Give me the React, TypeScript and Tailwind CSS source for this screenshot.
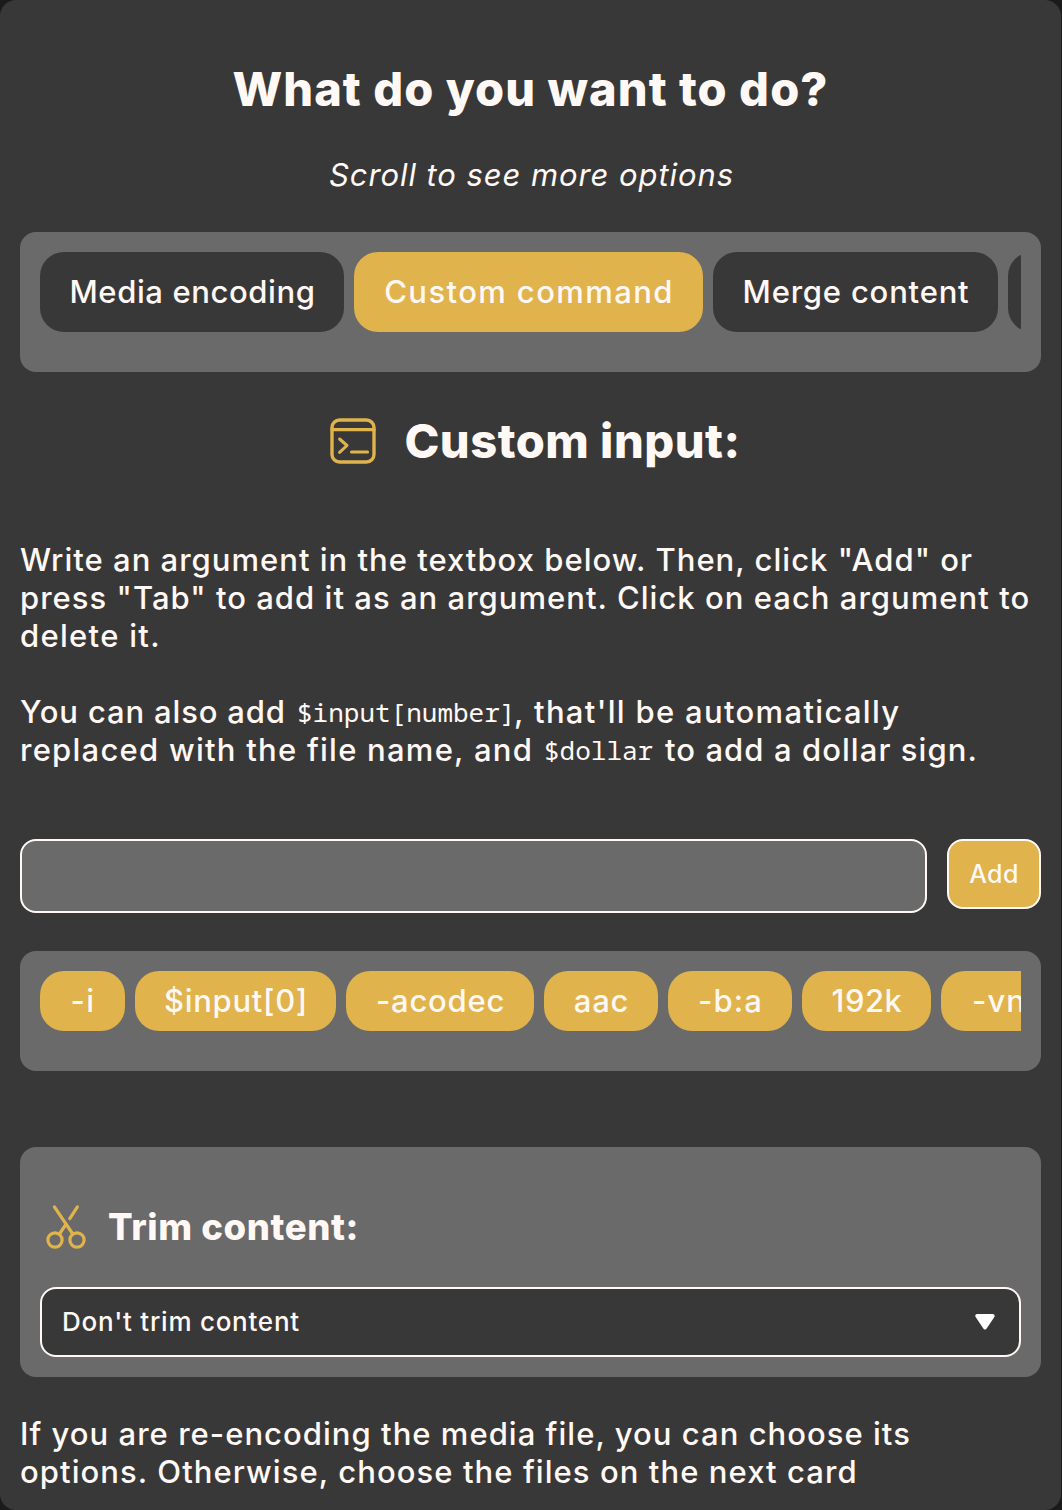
const tabs = [
  { label: "Media encoding", style: "w-[304px] bg-[#383838] tracking-[0.6px]" },
  { label: "Custom command", style: "w-[349px] bg-[#e0b34c] tracking-[1.4px]" },
  { label: "Merge content", style: "w-[285px] bg-[#383838] tracking-[0.8px]" },
  { label: "", style: "w-[220px] bg-[#383838]" },
];

const args = [
  { label: "-i", style: "w-[85px] tracking-[1.4px]" },
  { label: "$input[0]", style: "w-[201px] tracking-[0.7px]" },
  { label: "-acodec", style: "w-[188px] tracking-[0.75px]" },
  { label: "aac", style: "w-[114px] tracking-[0.8px]" },
  { label: "-b:a", style: "w-[124px] tracking-[1.1px]" },
  { label: "192k", style: "w-[129px] tracking-[0.5px]" },
  { label: "-vn", style: "w-[115px] tracking-[1px]" },
];

function ConsoleIcon() {
  return (
    <svg width="46" height="46" viewBox="0 0 46 46" fill="none" stroke="#e0b34c" strokeLinecap="round" strokeLinejoin="round">
      <rect x="2" y="2" width="42" height="42" rx="7.5" strokeWidth="3.4" />
      <path d="M2 11.7H44" strokeWidth="3.2" />
      <path d="M9.6 21L17 27.5L9.6 34.4M21.5 34H37.6" strokeWidth="3" />
    </svg>
  );
}

function ScissorsIcon() {
  return (
    <svg width="40" height="46" viewBox="0 0 40 46" fill="none" stroke="#e0b34c" strokeWidth="3.2" strokeLinecap="round">
      <circle cx="9" cy="36" r="7.1" />
      <circle cx="31" cy="36" r="7.1" />
      <path d="M8.4 2.9L26.8 30M31.4 2.9L23.8 14.7" />
      <path d="M19.5 21L13.4 30" />
    </svg>
  );
}

export default function App() {
  return (
    <div className="h-[1510px] w-[1062px] overflow-hidden bg-[#1b1b1b]">
      <main className="flex h-[1510px] w-[1061px] flex-col rounded-2xl bg-[#383838] px-5 pt-[61px] font-['Inter',sans-serif] text-[31px] leading-[38px] font-[450] whitespace-nowrap text-[#fff8f5]">
        <h1 className="h-14 text-center text-[47px] leading-[56px] font-extrabold tracking-[1.07px]">What do you want to do?</h1>
        <p className="mt-[39px] pl-0.5 text-center tracking-[0.92px] italic">Scroll to see more options</p>

        <nav className="mt-[38px] h-[140px] rounded-2xl bg-[#6a6a6a] p-5">
          <div className="flex gap-2.5 overflow-hidden">
            {tabs.map((t, i) => (
              <button key={i} className={`h-20 shrink-0 rounded-3xl pl-px text-center ${t.style}`}>
                {t.label}
              </button>
            ))}
          </div>
        </nav>

        <div className="mt-[46px] flex h-[46px] items-center justify-center gap-[28px] pl-[10px]">
          <ConsoleIcon />
          <h2 className="text-[47px] leading-[46px] font-extrabold tracking-[0.5px]">Custom input:</h2>
        </div>

        <p className="mt-[77px]">
          <span className="block tracking-[1.01px]">Write an argument in the textbox below. Then, click "Add" or</span>
          <span className="block tracking-[1.03px]">press "Tab" to add it as an argument. Click on each argument to</span>
          <span className="block tracking-[1.3px]">delete it.</span>
        </p>
        <p className="mt-[38px]">
          <span className="flex">
            <span className="w-[276px] tracking-[0.85px]">You can also add</span>
            <code className="w-[218px] pl-px font-['Noto_Sans_Mono',monospace] text-[26px]">$input[number]</code>
            <span className="tracking-[1.32px]">, that'll be automatically</span>
          </span>
          <span className="flex">
            <span className="w-[523px] tracking-[1.25px]">replaced with the file name, and</span>
            <code className="w-[121px] pl-px font-['Noto_Sans_Mono',monospace] text-[26px]">$dollar</code>
            <span className="pl-px tracking-[1.07px]">to add a dollar sign.</span>
          </span>
        </p>

        <div className="mt-[70px] flex items-start gap-5">
          <input className="h-[74px] min-w-0 flex-1 rounded-2xl border-2 border-[#fff8f5] bg-[#6a6a6a] px-5 outline-none" />
          <button className="h-[70px] w-[94px] rounded-2xl border-2 border-[#fff8f5] bg-[#e0b34c] text-[25px] tracking-[0.4px]">Add</button>
        </div>

        <div className="mt-[38px] h-[120px] rounded-2xl bg-[#6a6a6a] p-5">
          <div className="flex gap-2.5 overflow-hidden">
            {args.map((a) => (
              <button key={a.label} className={`h-[60px] shrink-0 rounded-3xl bg-[#e0b34c] pl-px text-center ${a.style}`}>
                {a.label}
              </button>
            ))}
          </div>
        </div>

        <section className="mt-[76px] h-[230px] rounded-2xl bg-[#6a6a6a] px-5 pt-[57px]">
          <div className="flex h-[46px] items-center gap-[22px] pl-1.5">
            <ScissorsIcon />
            <h3 className="text-[36.5px] font-extrabold tracking-[0.6px]">Trim content:</h3>
          </div>
          <div className="mt-[37px] flex h-[70px] items-center justify-between rounded-2xl border-2 border-[#fff8f5] bg-[#383838] pr-6 pl-5 text-[26px] tracking-[0.75px]">
            <span>Don't trim content</span>
            <svg width="20" height="16" viewBox="0 0 20 16" fill="#fff" stroke="#fff" strokeWidth="4" strokeLinejoin="round">
              <path d="M2.3 2H17.7L10 13.5Z" />
            </svg>
          </div>
        </section>

        <p className="mt-[38px]">
          <span className="block tracking-[1.03px]">If you are re-encoding the media file, you can choose its</span>
          <span className="block tracking-[1.07px]">options. Otherwise, choose the files on the next card</span>
        </p>
      </main>
    </div>
  );
}
